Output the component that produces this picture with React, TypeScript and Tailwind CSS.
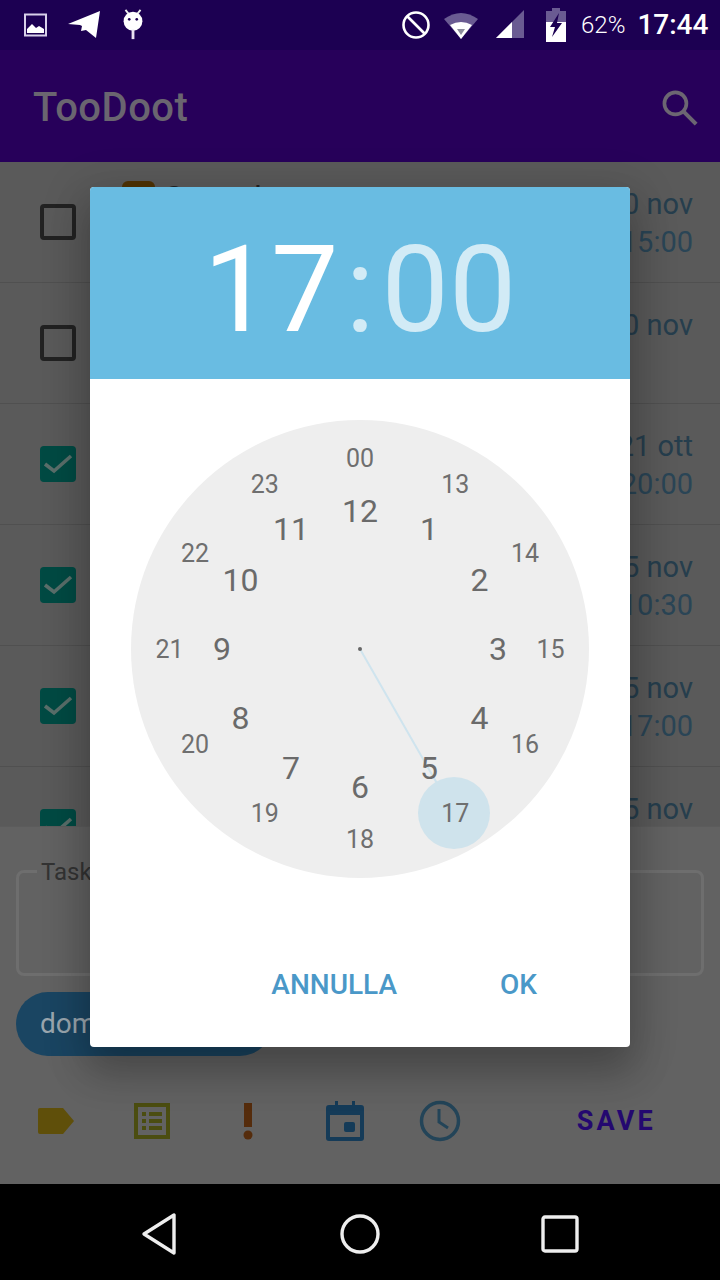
const font = { fontFamily: 'Roboto, "Noto Sans", sans-serif' };

const rows = [
  { checked: false, date: "30 nov", time: "15:00", tag: true },
  { checked: false, date: "30 nov", time: "" },
  { checked: true, date: "21 ott", time: "20:00" },
  { checked: true, date: "15 nov", time: "10:30" },
  { checked: true, date: "15 nov", time: "17:00" },
  { checked: true, date: "15 nov", time: "" },
];

const outer = ["00", "13", "14", "15", "16", "17", "18", "19", "20", "21", "22", "23"];
const inner = ["12", "1", "2", "3", "4", "5", "6", "7", "8", "9", "10", "11"];

function pos(i: number, r: number) {
  const a = (i * Math.PI) / 6;
  return { left: 229 + r * Math.sin(a), top: 228.5 - r * Math.cos(a) };
}

function Check({ checked }: { checked: boolean }) {
  if (!checked)
    return <div className="w-9 h-9 rounded-[4px] border-[4px] border-[#222222] shrink-0" />;
  return (
    <div className="w-9 h-9 rounded-[4px] bg-[#004a43] shrink-0">
      <svg width="36" height="36" viewBox="0 0 36 36" fill="none">
        <path d="M5 18l9 7L31 10" stroke="#5a6e6a" strokeWidth="3.6" />
      </svg>
    </div>
  );
}

function Row({ r }: { r: (typeof rows)[number] }) {
  return (
    <div className="h-[121px] shrink-0 border-b border-[#505050] flex items-center pl-10 pr-[27px] relative">
      <Check checked={r.checked} />
      {r.tag && (
        <div className="flex items-start absolute left-[122px] top-[19px] gap-2">
          <div className="w-[33px] h-[33px] rounded-md bg-[#4f3205]" />
          <span className="text-[32px] leading-none text-[#222222]">Consulta</span>
        </div>
      )}
      <div className="ml-auto h-[84px] flex flex-col items-end text-[#263e4d] text-[29px] leading-[38px] self-start mt-[23px]">
        <span>{r.date}</span>
        <span className="text-[#2a4556]">{r.time}</span>
      </div>
    </div>
  );
}

function ToolIcons() {
  return (
    <div className="flex items-center">
      <svg width="40" height="30" viewBox="0 0 40 30" className="ml-[37px]">
        <path d="M3 2h23l11 13-11 13H3a2 2 0 01-2-2V4a2 2 0 012-2z" fill="#5f4f0a" />
      </svg>
      <svg width="38" height="38" viewBox="0 0 38 38" className="ml-[56px]">
        <path fillRule="evenodd" d="M1 1h36v36H1zM5 5v28h28V5z" fill="#4b4d10" />
        <path d="M9 10h4v4H9zM16 10h13v4H16zM9 17h4v4H9zM16 17h13v4H16zM9 24h4v4H9zM16 24h13v4H16z" fill="#4b4d10" />
      </svg>
      <svg width="14" height="38" viewBox="0 0 14 38" className="ml-[70px]">
        <rect x="3" y="1" width="8" height="24" fill="#552c0c" />
        <circle cx="7" cy="33" r="4.5" fill="#552c0c" />
      </svg>
      <svg width="38" height="42" viewBox="0 0 38 42" className="ml-[71px]">
        <path fillRule="evenodd" d="M3 5h6V1h3v4h14V1h3v4h6a3 3 0 013 3v30a3 3 0 01-3 3H3a3 3 0 01-3-3V8a3 3 0 013-3zM4 15v22h30V15z" fill="#153b58" />
        <rect x="18" y="22" width="11" height="10" rx="2" fill="#153b58" />
      </svg>
      <svg width="42" height="42" viewBox="0 0 42 42" className="ml-[55px]" fill="none">
        <circle cx="21" cy="21" r="18.5" stroke="#234458" strokeWidth="3.5" />
        <path d="M20 9v13l9 6" stroke="#234458" strokeWidth="3" />
      </svg>
    </div>
  );
}

export default function App() {
  return (
    <div className="relative w-[720px] h-[1280px] overflow-hidden flex flex-col bg-[#5a5a5a]" style={font}>
      {/* status bar */}
      <div className="h-[50px] shrink-0 bg-[#1c0052] flex items-center text-white">
        <svg width="24" height="24" viewBox="0 0 24 24" className="ml-6" fill="none">
          <rect x="1" y="1.5" width="21" height="21" stroke="#d8d0ea" strokeWidth="2" />
          <path d="M3 20v-4l5-5 4 4 3-2 5 3v4z" fill="#fff" />
        </svg>
        <svg width="34" height="30" viewBox="0 0 34 30" className="ml-[19px]">
          <path d="M1 14L33 1l-4 27-10-8-5 1 1-5-2-1z" fill="#fff" />
        </svg>
        <svg width="24" height="32" viewBox="0 0 24 34" className="ml-[20px]">
          <path d="M4 1l4 5M20 1l-4 5" stroke="#eee" strokeWidth="2" />
          <ellipse cx="12" cy="13" rx="10" ry="10" fill="#fff" />
          <circle cx="8" cy="11" r="1.4" fill="#1c0052" />
          <circle cx="16" cy="11" r="1.4" fill="#1c0052" />
          <rect x="10.5" y="22" width="3" height="10" fill="#e8e0f0" />
        </svg>
        <svg width="30" height="30" viewBox="0 0 30 30" className="ml-[256px]" fill="none">
          <circle cx="15" cy="15" r="12.5" stroke="#fff" strokeWidth="2.6" />
          <path d="M6 6l18 18" stroke="#fff" strokeWidth="2.6" />
        </svg>
        <svg width="36" height="30" viewBox="0 0 36 30" className="ml-[12px]">
          <path d="M1 9Q18 -3 35 9L18 29z" fill="#6a5b92" />
          <path d="M7 15Q18 9 29 15L18 29z" fill="#fff" />
          <path d="M14 19h8l-4 6z" fill="#8c8c9c" />
        </svg>
        <svg width="30" height="30" viewBox="0 0 30 30" className="ml-[16px]">
          <path d="M1 28L29 0v28z" fill="#6a5b92" />
          <path d="M1 28L17 12v16z" fill="#fff" />
        </svg>
        <svg width="22" height="34" viewBox="0 0 22 34" className="ml-[20px]">
          <path d="M7 0h8v3h6v13H1V3h6z" fill="#6a5b92" />
          <path d="M1 14h20v20H1z" fill="#fff" />
          <path d="M14 5L5 19h5l-3 10 10-14h-5z" fill="#1c0052" />
        </svg>
        <span className="ml-[14px] text-[24px] font-light leading-none">62%</span>
        <span className="ml-[12px] text-[28px] font-medium leading-none">17:44</span>
      </div>

      {/* app bar */}
      <div className="h-[112px] shrink-0 bg-[#27005a] flex items-center pl-[33px] pr-[18px] justify-between">
        <span className="text-[40px] font-medium text-[#6a6570] leading-none tracking-[0.5px] mt-[3px]">TooDoot</span>
        <svg width="44" height="44" viewBox="0 0 24 24" fill="none" stroke="#6c6672" strokeWidth="2" className="mt-[3px]">
          <circle cx="9.5" cy="9.5" r="6" />
          <path d="M14 14l6.8 6.8" strokeWidth="2.2" />
        </svg>
      </div>

      {/* list */}
      <div className="h-[664px] shrink-0 overflow-hidden flex flex-col bg-[#5a5a5a]">
        {rows.map((r, i) => (
          <Row key={i} r={r} />
        ))}
      </div>

      {/* editor */}
      <div className="flex-1 bg-[#626262] border-t border-[#5c5c5c] flex flex-col px-4 min-h-0">
        <div className="relative mt-[43px] h-[106px] rounded-lg border-[3px] border-[#6e6e6e]">
          <span className="absolute left-[18px] -top-[15px] px-1 bg-[#626262] text-[24px] leading-[28px] text-[#333333]">
            Task
          </span>
        </div>
        <div className="mt-[16px] h-[64px] w-[256px] rounded-full bg-[#1a4562] flex items-center pl-6 text-[28px] text-[#9aa6ae]">
          domani
        </div>
        <div className="mt-[44px] -mx-4 flex items-center justify-between pr-[64px]">
          <ToolIcons />
          <span className="text-[27px] font-bold tracking-[3.2px] text-[#240870]">SAVE</span>
        </div>
      </div>

      {/* nav */}
      <div className="h-[96px] shrink-0 bg-black flex items-center justify-center pt-1">
        <div className="flex items-center gap-[160px]">
          <svg width="40" height="44" viewBox="0 0 40 44" fill="none">
            <path d="M34 3v38L4 22z" stroke="#eeeeee" strokeWidth="3.4" strokeLinejoin="round" />
          </svg>
          <svg width="40" height="40" viewBox="0 0 40 40" fill="none">
            <circle cx="20" cy="20" r="18" stroke="#eeeeee" strokeWidth="3.4" />
          </svg>
          <svg width="40" height="40" viewBox="0 0 40 40" fill="none">
            <rect x="3" y="3" width="34" height="34" rx="2" stroke="#eeeeee" strokeWidth="3.4" />
          </svg>
        </div>
      </div>

      {/* dialog */}
      <div className="absolute left-[90px] top-[187px] w-[540px] h-[860px] rounded-[4px] overflow-hidden bg-white shadow-[0_24px_38px_3px_rgba(0,0,0,0.2),0_9px_46px_8px_rgba(0,0,0,0.12)] flex flex-col">
        <div className="h-[192px] shrink-0 bg-[#69bce2] flex items-center justify-center text-[120px] leading-none pt-[14px]">
          <span className="text-white">17</span>
          <span className="text-[#d2ebf6] mx-[7px]">:</span>
          <span className="text-[#d2ebf6]">00</span>
        </div>
        <div className="flex-1 flex flex-col items-center">
          <div className="relative w-[458px] h-[458px] mt-[41px] rounded-full bg-[#eeeeee] shrink-0">
            <svg width="458" height="458" viewBox="0 0 458 458" className="absolute left-0 top-0">
              <line x1="229" y1="229" x2="323" y2="393" stroke="#cfe4ee" strokeWidth="2" />
              <circle cx="323" cy="393" r="36" fill="#cfe3ec" />
              <circle cx="229" cy="229" r="2" fill="#666666" />
            </svg>
            {outer.map((n, i) => (
              <span
                key={n}
                className="absolute -translate-x-1/2 -translate-y-1/2 text-[25px] leading-none text-[#6f6f6f]"
                style={pos(i, 190.5)}
              >
                {n}
              </span>
            ))}
            {inner.map((n, i) => (
              <span
                key={n}
                className="absolute -translate-x-1/2 -translate-y-1/2 text-[32px] leading-none text-[#6a6a6a]"
                style={pos(i, 138)}
              >
                {n}
              </span>
            ))}
          </div>
          <div className="mt-auto mb-[48px] self-end flex items-center gap-[103px] pr-[93px] text-[28px] font-medium text-[#4a98c8] leading-none">
            <span>ANNULLA</span>
            <span>OK</span>
          </div>
        </div>
      </div>
    </div>
  );
}
